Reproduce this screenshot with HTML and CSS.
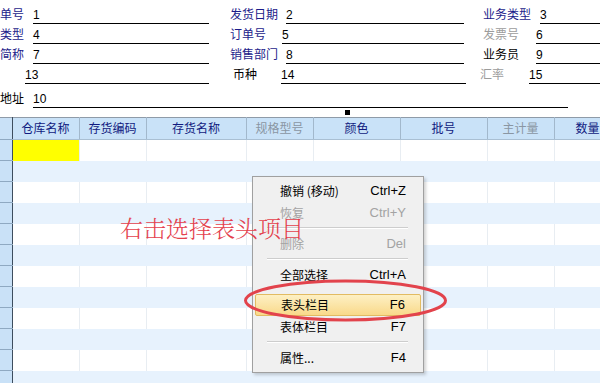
FILE: index.html
```html
<!DOCTYPE html>
<html lang="zh-CN">
<head>
  <meta charset="UTF-8" />
  <title>发货单</title>
  <link rel="stylesheet" href="styles.css">
</head>
<body>
  <div class="head-form">
    <div class="field f1"><span class="label navy w33">单号</span><span class="value">1</span></div>
    <div class="field f2"><span class="label navy w56">发货日期</span><span class="value">2</span></div>
    <div class="field f3"><span class="label navy w57">业务类型</span><span class="value">3</span></div>

    <div class="field f1"><span class="label navy w33">类型</span><span class="value">4</span></div>
    <div class="field f2"><span class="label navy w52">订单号</span><span class="value">5</span></div>
    <div class="field f3"><span class="label gray w53">发票号</span><span class="value">6</span></div>

    <div class="field f1"><span class="label navy w33">简称</span><span class="value">7</span></div>
    <div class="field f2"><span class="label navy w56">销售部门</span><span class="value">8</span></div>
    <div class="field f3"><span class="label w53">业务员</span><span class="value">9</span></div>

    <div class="field f1"><span class="label w25"></span><span class="value">13</span></div>
    <div class="field f2 shift"><span class="label w48">币种</span><span class="value">14</span></div>
    <div class="field f3 back"><span class="label gray w49">汇率</span><span class="value">15</span></div>
  </div>

  <div class="field address"><span class="label w33">地址</span><span class="value">10</span></div>
  <div class="handle"></div>

  <table class="grid">
    <colgroup>
      <col class="c-row"><col class="c-s"><col class="c-s"><col class="c-l"><col class="c-s"><col class="c-m"><col class="c-m"><col class="c-s"><col class="c-s">
    </colgroup>
    <thead>
      <tr>
        <th class="rowhead"></th>
        <th>仓库名称</th>
        <th>存货编码</th>
        <th>存货名称</th>
        <th class="muted">规格型号</th>
        <th>颜色</th>
        <th>批号</th>
        <th class="muted">主计量</th>
        <th>数量</th>
      </tr>
    </thead>
    <tbody>
      <tr><td class="rowhead"></td><td class="current"></td><td></td><td></td><td></td><td></td><td></td><td></td><td></td></tr>
      <tr><td class="rowhead"></td><td></td><td></td><td></td><td></td><td></td><td></td><td></td><td></td></tr>
      <tr><td class="rowhead"></td><td></td><td></td><td></td><td></td><td></td><td></td><td></td><td></td></tr>
      <tr><td class="rowhead"></td><td></td><td></td><td></td><td></td><td></td><td></td><td></td><td></td></tr>
      <tr><td class="rowhead"></td><td></td><td></td><td></td><td></td><td></td><td></td><td></td><td></td></tr>
      <tr><td class="rowhead"></td><td></td><td></td><td></td><td></td><td></td><td></td><td></td><td></td></tr>
      <tr><td class="rowhead"></td><td></td><td></td><td></td><td></td><td></td><td></td><td></td><td></td></tr>
      <tr><td class="rowhead"></td><td></td><td></td><td></td><td></td><td></td><td></td><td></td><td></td></tr>
      <tr><td class="rowhead"></td><td></td><td></td><td></td><td></td><td></td><td></td><td></td><td></td></tr>
      <tr><td class="rowhead"></td><td></td><td></td><td></td><td></td><td></td><td></td><td></td><td></td></tr>
      <tr><td class="rowhead"></td><td></td><td></td><td></td><td></td><td></td><td></td><td></td><td></td></tr>
      <tr><td class="rowhead"></td><td></td><td></td><td></td><td></td><td></td><td></td><td></td><td></td></tr>
    </tbody>
  </table>

  <div class="menu">
    <div class="item"><span>撤销 (移动)</span><span>Ctrl+Z</span></div>
    <div class="item disabled"><span>恢复</span><span>Ctrl+Y</span></div>
    <div class="sep"></div>
    <div class="item disabled"><span>删除</span><span>Del</span></div>
    <div class="sep"></div>
    <div class="item"><span>全部选择</span><span>Ctrl+A</span></div>
    <div class="item active"><span>表头栏目</span><span>F6</span></div>
    <div class="item"><span>表体栏目</span><span>F7</span></div>
    <div class="sep"></div>
    <div class="item"><span>属性...</span><span>F4</span></div>
  </div>

  <div class="note">右击选择表头项目</div>

  <svg class="mark" width="600" height="383" viewBox="0 0 600 383">
    <ellipse cx="345.5" cy="300.5" rx="100" ry="19.5" fill="none" stroke="#e2434c" stroke-width="3"/>
  </svg>
</body>
</html>
```

FILE: styles.css
```css
body {
  margin: 0;
  width: 600px;
  height: 383px;
  overflow: hidden;
  position: relative;
  background: #fff;
  font-family: "Liberation Sans", "Noto Sans CJK SC", sans-serif;
  font-size: 12px;
  color: #000;
}
.head-form {
  display: grid;
  grid-template-columns: 230px 253px 117px;
  padding-top: 4px;
}
.field {
  display: flex;
  height: 20px;
  box-sizing: border-box;
  padding-top: 4px;
  line-height: 15px;
  white-space: nowrap;
}
.field .value {
  flex: 1;
  border-bottom: 1px solid #000;
}
.f1 { width: 209px; }
.f2 { width: 234px; }
.f3 { width: 117px; }
.f2.shift { margin-left: 3px; width: 233px; }
.f3.back { margin-left: -3px; width: 120px; }
.label { flex: none; }
.navy { color: #1c1c8a; }
.gray { color: #9c9c9c; }
.w25 { width: 25px; }
.w33 { width: 33px; }
.w48 { width: 48px; }
.w49 { width: 49px; }
.w52 { width: 52px; }
.w53 { width: 53px; }
.w56 { width: 56px; }
.w57 { width: 57px; }
.address {
  width: 568px;
  margin-top: 4px;
}
.handle {
  width: 5px;
  height: 5px;
  background: #000;
  margin: 2px 0 0 345px;
}
.grid {
  margin-top: 2px;
  border-collapse: collapse;
  table-layout: fixed;
  width: 621px;
}
.c-row { width: 12px; }
.c-s { width: 67px; }
.c-m { width: 87px; }
.c-l { width: 100px; }
.grid th {
  height: 21px;
  padding: 0;
  background: #c9e2f8;
  border-top: 1px solid #8f9ba8;
  border-bottom: 1px solid #a9bfd3;
  border-right: 1px solid #a2b8cc;
  color: #101a80;
  font-weight: normal;
  line-height: 20px;
  text-align: center;
  white-space: nowrap;
}
.grid th.muted { color: #8a96a3; }
.grid td {
  height: 21px;
  padding: 0;
  border-right: 1px solid #e8edf2;
  box-sizing: border-box;
}
.grid tbody tr:nth-child(even) td {
  background: #e7f2fd;
  border-right-color: #e7f2fd;
}
.grid .rowhead,
.grid tbody tr:nth-child(even) td.rowhead {
  background: #c9e1f7;
  border-right: 1px solid #3d4d5e;
  border-bottom: 1px solid #8fa9c2;
}
.grid td.current { background: #ffff00; }
.menu {
  position: absolute;
  left: 252px;
  top: 176px;
  width: 172px;
  box-sizing: border-box;
  padding: 3px 2px;
  background: #f0f0f0;
  border: 1px solid #a0a0a0;
  box-shadow: 2px 2px 3px rgba(0, 0, 0, 0.18);
  font-family: "Noto Sans CJK SC", sans-serif;
}
.item {
  display: flex;
  justify-content: space-between;
  height: 22px;
  line-height: 22px;
  padding: 0 15px 0 25px;
  box-sizing: border-box;
  white-space: nowrap;
}
.item span:last-child { font-family: "Liberation Sans", sans-serif; font-size: 13px; }
.item.disabled { color: #a3a3a3; }
.item.active {
  margin-top: 8px;
  background: linear-gradient(#fdf0c4, #f9d98a);
  border: 1px solid #e2bb62;
  border-radius: 2px;
  line-height: 20px;
}
.sep {
  margin: 3px 13px 4px 12px;
  border-top: 1px solid #cdcdcd;
  border-bottom: 1px solid #fff;
}
.note {
  position: absolute;
  left: 120px;
  top: 214px;
  font-family: "Noto Serif CJK SC", "Noto Sans CJK SC", serif;
  font-size: 23px;
  font-weight: 300;
  line-height: 28px;
  color: #e4404c;
}
.mark {
  position: absolute;
  left: 0;
  top: 0;
  pointer-events: none;
}
```
